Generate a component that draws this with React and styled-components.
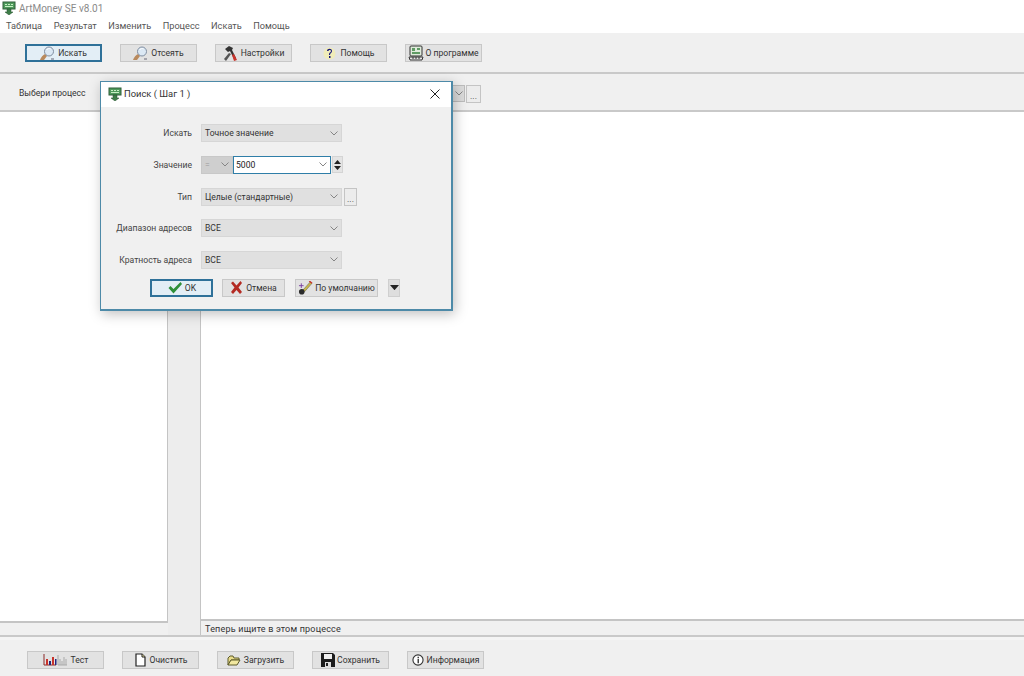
import * as React from "react"
import styled, { createGlobalStyle } from "styled-components"

const GlobalStyle = createGlobalStyle`
  html, body {
    margin: 0;
    padding: 0;
    background: #f0f0f0;
    overflow: hidden;
  }
  * {
    box-sizing: border-box;
  }
`

const Page = styled.div`
  position: relative;
  display: flex;
  flex-direction: column;
  width: 1024px;
  height: 676px;
  overflow: hidden;
  background: #f0f0f0;
  color: #333;
  font-family: Roboto, "Liberation Sans", sans-serif;
  font-size: 8.6px;
`

const TitleBar = styled.div`
  display: flex;
  align-items: center;
  gap: 3px;
  height: 18px;
  padding: 0 0 2px 2px;
  background: #fff;
  color: #8a8a8a;
  font-size: 10px;
`

const MenuBar = styled.div`
  display: flex;
  gap: 11.5px;
  height: 15px;
  padding-left: 6px;
  background: #fff;
  color: #555;
  font-size: 9.2px;
  line-height: 15px;
`

const ToolBar = styled.div`
  display: flex;
  align-items: flex-start;
  gap: 18px;
  height: 41px;
  padding: 11px 0 0 25px;
  border-bottom: 2px solid #c9c9c9;
`

const ProcessBar = styled.div`
  display: flex;
  align-items: flex-start;
  height: 38px;
  padding: 11px 0 0 19px;
  border-bottom: 2px solid #c9c9c9;
`

const ProcessLabel = styled.span`
  width: 433px;
  line-height: 16px;
`

const ComboArrow = styled.span`
  display: flex;
  align-items: center;
  justify-content: center;
  width: 13px;
  height: 17px;
  background: #dcdcdc;
  border: 1px solid #bdbdbd;
`

const Dots = styled.span`
  display: flex;
  align-items: flex-end;
  justify-content: center;
  width: ${(p) => p.$w || 15}px;
  height: ${(p) => p.$h || 18}px;
  margin-left: ${(p) => p.$gap || 1}px;
  background: #ececec;
  border: 1px solid #c4c4c4;
  color: #444;
  line-height: 12px;
`

const Workspace = styled.div`
  display: flex;
  height: 525px;
  border-bottom: 2px solid #c9c9c9;
`

const SidePanel = styled.div`
  width: 168px;
  height: 511px;
  background: #fff;
  border-right: 1px solid #c4c4c4;
  border-bottom: 2px solid #c4c4c4;
`

const Gutter = styled.div`
  width: 33px;
  background: #ededed;
  border-right: 1px solid #c4c4c4;
`

const MainColumn = styled.div`
  display: flex;
  flex: 1;
  flex-direction: column;
`

const MainPanel = styled.div`
  height: 511px;
  background: #fff;
  border-bottom: 2px solid #c4c4c4;
`

const StatusText = styled.div`
  padding: 2px 0 0 4px;
  color: #333;
  font-size: 9px;
  line-height: 12px;
  letter-spacing: 0.2px;
`

const BottomBar = styled.div`
  display: flex;
  align-items: flex-start;
  gap: 18px;
  flex: 1;
  padding: 11px 0 0 27px;
  border-top: 3px solid #f4f4f4;
`

const Button = styled.div`
  display: flex;
  align-items: center;
  justify-content: center;
  gap: ${(p) => p.$gap ?? 3}px;
  flex: none;
  width: ${(p) => p.$w || 77}px;
  height: 18px;
  background: ${(p) => (p.$primary ? "#e3eef6" : "#e2e2e2")};
  border: ${(p) => (p.$primary ? "2px solid #2f7199" : "1px solid #c8c8c8")};
  color: #333;
  white-space: nowrap;
`

/* the search window floats over the main window */
const Dialog = styled.div`
  position: absolute;
  left: 100px;
  top: 81px;
  width: 353px;
  height: 230px;
  background: #f0f0f0;
  border: 1px solid #4d8aa8;
  border-width: 1px 2px 2px 1px;
  box-shadow: 2px 3px 12px rgba(0, 0, 0, 0.25);
`

const DialogTitle = styled.div`
  display: flex;
  align-items: center;
  gap: 2px;
  height: 25px;
  padding: 0 11px 2px 7px;
  background: #fff;
  color: #333;
  font-size: 9.4px;
`

const CloseIcon = styled.svg`
  margin-left: auto;
`

const Form = styled.div`
  display: flex;
  flex-direction: column;
  gap: 13.6px;
  padding-top: 17.4px;
`

const Row = styled.div`
  display: flex;
  align-items: center;
  height: 18px;
`

const Label = styled.span`
  width: 91px;
  margin-right: 9px;
  color: #444;
  text-align: right;
`

const Select = styled.div`
  display: flex;
  align-items: center;
  justify-content: space-between;
  width: ${(p) => p.$w || 141}px;
  height: 18px;
  padding: 0 3px 0 3px;
  background: ${(p) => (p.$off ? "#cfcfcf" : "#e0e0e0")};
  border: 1px solid ${(p) => (p.$off ? "#c8c8c8" : "#d6d6d6")};
  color: ${(p) => (p.$off ? "#999" : "#333")};
`

const ValueInput = styled.div`
  display: flex;
  align-items: center;
  justify-content: space-between;
  width: 98px;
  height: 18px;
  padding: 0 3px 0 2px;
  background: #fff;
  border: 1px solid #2f7ea8;
  color: #222;
`

const Spin = styled.div`
  display: flex;
  flex-direction: column;
  align-items: center;
  justify-content: center;
  gap: 2px;
  width: 11px;
  height: 17px;
  margin-left: 1px;
  background: #e4e4e4;
  border: 1px solid #d4d4d4;
`

const DialogActions = styled.div`
  display: flex;
  align-items: flex-start;
  margin-top: 10px;
  padding-left: 49px;
`

const ActionSlot = styled.div`
  margin-right: ${(p) => p.$gap}px;
`

const MoreButton = styled.div`
  display: flex;
  align-items: center;
  justify-content: center;
  width: 12px;
  height: 18px;
  background: #dedede;
  border: 1px solid #cfcfcf;
`

const Chevron = () => (
  <svg width="8" height="5" viewBox="0 0 8 5">
    <path d="M.5.5L4 4 7.500.5" fill="none" stroke="#858585" strokeWidth="1" />
  </svg>
)

const AppIcon = ({ size = 14 }) => (
  <svg width={size} height={size} viewBox="0 0 14 14">
    <rect x="1" y="1" width="12" height="7" fill="#4f9a5c" stroke="#2e5d38" />
    <path d="M3 3h2v1H3zM6 3h2v1H6zM9 3h2v1H9zM3 5h8v1H3z" fill="#c7efc4" />
    <path d="M5 8h4v3h2l-4 3-4-3h2z" fill="#3d7d48" stroke="#24502d" strokeWidth=".5" />
  </svg>
)

const SearchIcon = () => (
  <svg width="15" height="15" viewBox="0 0 15 15">
    <path d="M0 14c1-3 3-5 5-6l2 2-3 4z" fill="#b98a5e" />
    <circle cx="9" cy="5.500" r="4.500" fill="#dbe8f4" stroke="#7f8da0" />
    <path d="M6.500 4c1-1.500 3-2 4-1" fill="none" stroke="#fff" />
    <path d="M11 12.500h3v1h-3z" fill="#667" />
  </svg>
)

const ToolsIcon = () => (
  <svg width="15" height="15" viewBox="0 0 15 15">
    <path d="M2 3l4-3 4 2-1 2 4 8-2 1-4-8-2 1z" fill="#333" />
    <path d="M9 9l2 6 3-1-3-6z" fill="#c9332b" />
    <path d="M1 13l5-6 2 1-5 7z" fill="#555" />
  </svg>
)

const HelpIcon = () => (
  <svg width="15" height="15" viewBox="0 0 15 15">
    <circle cx="7.500" cy="7.500" r="6" fill="#f6f1a8" opacity=".7" />
    <path d="M5 5c0-3 5-3 5 0 0 2-2 2-2 4H7c0-3 2-2.500 2-4 0-1.500-2.500-1.500-2.500 0z" fill="#17177a" />
    <rect x="7" y="10" width="1.500" height="2" fill="#17177a" />
  </svg>
)

const AboutIcon = () => (
  <svg width="16" height="16" viewBox="0 0 16 16">
    <rect x="2" y="1" width="12" height="10" rx="1" fill="#dfeadb" stroke="#333" />
    <path d="M4 3h3v3H4zM9 3h3v2H9zM4 7h8v2H4z" fill="#5f9a64" />
    <path d="M1 12h14l-1 3H2z" fill="#e8e8e8" stroke="#333" />
    <path d="M4 13h2M7 13h2M10 13h2" stroke="#333" />
  </svg>
)

const ChartIcon = () => (
  <svg width="25" height="12" viewBox="0 0 25 12">
    <path d="M1 0v11h12" fill="none" stroke="#8a2b2b" />
    <rect x="3" y="5" width="2" height="6" fill="#c9332b" />
    <rect x="6" y="7" width="2" height="4" fill="#25257e" />
    <rect x="9" y="3" width="2" height="8" fill="#c9332b" />
    <rect x="12" y="5" width="1.500" height="6" fill="#25257e" />
    <path d="M15 1v10h9M17 5v6M19 7v4M21 3v8M23 5v6" fill="none" stroke="#aaa" />
  </svg>
)

const PageIcon = () => (
  <svg width="13" height="14" viewBox="0 0 13 14">
    <path d="M2 1h6l3 3v9H2z" fill="#fff" stroke="#222" strokeWidth="1.200" />
    <path d="M8 1v3h3" fill="#f4e9a6" stroke="#222" />
  </svg>
)

const FolderIcon = () => (
  <svg width="14" height="11" viewBox="0 0 14 11">
    <path d="M1 3l2-2h3l1 2h5v2H4l-3 5z" fill="#e9dc8a" stroke="#5c5a2a" />
    <path d="M1 10l3-5h9l-3 5z" fill="#f1e79f" stroke="#5c5a2a" />
  </svg>
)

const SaveIcon = () => (
  <svg width="14" height="14" viewBox="0 0 14 14">
    <path d="M0 0h12l2 2v12H0z" fill="#1c1c1c" />
    <rect x="3" y="1" width="8" height="5" fill="#eee" />
    <rect x="4" y="9" width="6" height="5" fill="#ddd" />
    <rect x="5" y="10" width="2" height="3" fill="#222" />
  </svg>
)

const InfoIcon = () => (
  <svg width="12" height="12" viewBox="0 0 13 13">
    <circle cx="6.500" cy="6.500" r="5.500" fill="#fff" stroke="#333" strokeWidth="1.200" />
    <path d="M6 3h1.500v1.500H6zM6 5.500h1.500V10H6z" fill="#333" />
  </svg>
)

const CheckIcon = () => (
  <svg width="16" height="13" viewBox="0 0 15 13">
    <path d="M1 7l2-2 3 3 7-7 1.500 2L6 12.500z" fill="#2f8f3a" />
  </svg>
)

const CrossIcon = () => (
  <svg width="13" height="13" viewBox="0 0 13 13">
    <path d="M1 2l2-1.500 3.500 4L10.500 0 12 2 8.500 6.500 12 11l-2 2-3.500-4L3 13l-2-2 3.500-4.500z" fill="#b42b23" />
  </svg>
)

const WandIcon = () => (
  <svg width="15" height="14" viewBox="0 0 16 15">
    <path d="M5 10l8-9 2 1.500-8 9z" fill="#c9b84a" stroke="#555" strokeWidth=".5" />
    <path d="M12 0l3 2.500" stroke="#c9332b" strokeWidth="1.500" />
    <circle cx="4" cy="11.500" r="3" fill="#2b2b2b" />
    <path d="M1 5h5M3.500 2.500v5" stroke="#7a3fa0" />
  </svg>
)

const SpinArrow = ({ up, size = 7 }) => (
  <svg width={size} height={size * 0.6} viewBox="0 0 7 4">
    <path d={up ? "M0 4h7L3.500 0z" : "M0 0h7L3.500 4z"} fill="#222" />
  </svg>
)

const toolButtons = [
  { text: "Искать", icon: <SearchIcon />, primary: true },
  { text: "Отсеять", icon: <SearchIcon /> },
  { text: "Настройки", icon: <ToolsIcon /> },
  { text: "Помощь", icon: <HelpIcon /> },
  { text: "О программе", icon: <AboutIcon />, gap: 1 },
]

const bottomButtons = [
  { text: "Тест", icon: <ChartIcon />, gap: 3 },
  { text: "Очистить", icon: <PageIcon />, gap: 3 },
  { text: "Загрузить", icon: <FolderIcon />, gap: 3 },
  { text: "Сохранить", icon: <SaveIcon />, gap: 2 },
  { text: "Информация", icon: <InfoIcon />, gap: 3 },
]

const App = () => (
  <Page>
    <GlobalStyle />
    <TitleBar>
      <AppIcon />
      ArtMoney SE v8.01
    </TitleBar>
    <MenuBar>
      <span>Таблица</span>
      <span>Результат</span>
      <span>Изменить</span>
      <span>Процесс</span>
      <span>Искать</span>
      <span>Помощь</span>
    </MenuBar>
    <ToolBar>
      {toolButtons.map((b) => (
        <Button key={b.text} $primary={b.primary} $gap={b.gap}>
          {b.icon}
          {b.text}
        </Button>
      ))}
    </ToolBar>
    <ProcessBar>
      <ProcessLabel>Выбери процесс</ProcessLabel>
      <ComboArrow>
        <Chevron />
      </ComboArrow>
      <Dots>...</Dots>
    </ProcessBar>
    <Workspace>
      <SidePanel />
      <Gutter />
      <MainColumn>
        <MainPanel />
        <StatusText>Теперь ищите в этом процессе</StatusText>
      </MainColumn>
    </Workspace>
    <BottomBar>
      {bottomButtons.map((b) => (
        <Button key={b.text} $gap={b.gap}>
          {b.icon}
          {b.text}
        </Button>
      ))}
    </BottomBar>

    <Dialog>
      <DialogTitle>
        <AppIcon />
        Поиск ( Шаг 1 )
        <CloseIcon width="10" height="10" viewBox="0 0 10 10">
          <path d="M.5.5l9 9M9.500.5l-9 9" stroke="#222" strokeWidth="1" />
        </CloseIcon>
      </DialogTitle>
      <Form>
        <Row>
          <Label>Искать</Label>
          <Select>
            Точное значение
            <Chevron />
          </Select>
        </Row>
        <Row>
          <Label>Значение</Label>
          <Select $w={32} $off>
            =
            <Chevron />
          </Select>
          <ValueInput>
            5000
            <Chevron />
          </ValueInput>
          <Spin>
            <SpinArrow up />
            <SpinArrow />
          </Spin>
        </Row>
        <Row>
          <Label>Тип</Label>
          <Select>
            Целые (стандартные)
            <Chevron />
          </Select>
          <Dots $gap={2} $w={13}>...</Dots>
        </Row>
        <Row>
          <Label>Диапазон адресов</Label>
          <Select>
            ВСЕ
            <Chevron />
          </Select>
        </Row>
        <Row>
          <Label>Кратность адреса</Label>
          <Select>
            ВСЕ
            <Chevron />
          </Select>
        </Row>
      </Form>
      <DialogActions>
        <ActionSlot $gap={9}>
          <Button $primary $w={63} $gap={2}>
            <CheckIcon />
            OK
          </Button>
        </ActionSlot>
        <ActionSlot $gap={10}>
          <Button $w={63}>
            <CrossIcon />
            Отмена
          </Button>
        </ActionSlot>
        <ActionSlot $gap={10}>
          <Button $w={83} $gap={2}>
            <WandIcon />
            По умолчанию
          </Button>
        </ActionSlot>
        <MoreButton>
          <SpinArrow size={9} />
        </MoreButton>
      </DialogActions>
    </Dialog>
  </Page>
)

export default App
